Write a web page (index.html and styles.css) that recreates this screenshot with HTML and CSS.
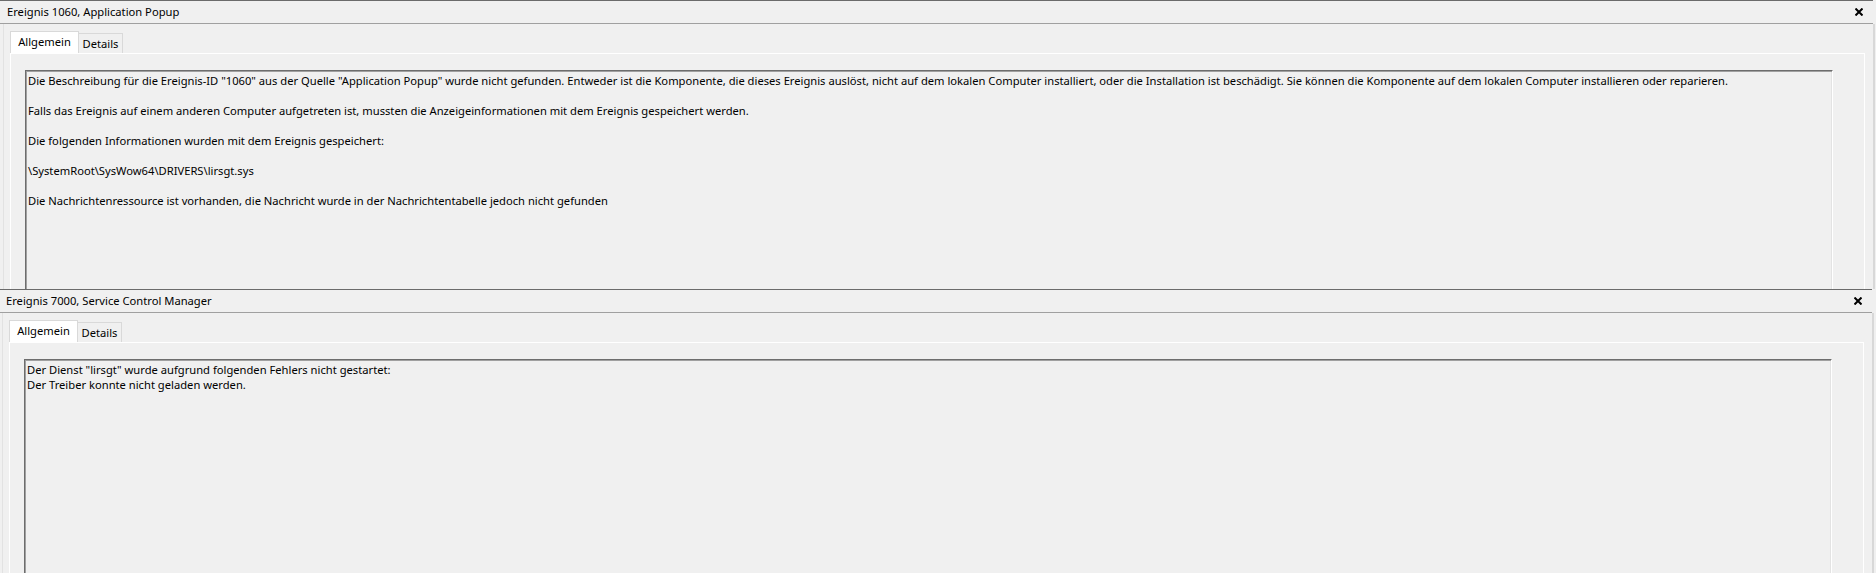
FILE: index.html
```html
<!DOCTYPE html>
<html lang="de">
<head>
<meta charset="utf-8">
<title>Ereignisse</title>
<link rel="stylesheet" href="styles.css">
</head>
<body>
<div class="panel">
  <div class="titlebar">
    <span class="title">Ereignis 1060, Application Popup</span>
    <svg class="close" width="8" height="8" viewBox="0 0 8 8"><path d="M0.5 0.5 L7.5 7.5 M7.5 0.5 L0.5 7.5" stroke="#000" stroke-width="2" fill="none"/></svg>
  </div>
  <div class="body">
    <div class="tabs">
      <div class="tab tab-active">Allgemein</div>
      <div class="tab tab-details">Details</div>
    </div>
    <div class="page">
      <div class="textbox">
        <p class="para">Die Beschreibung für die Ereignis-ID "1060" aus der Quelle "Application Popup" wurde nicht gefunden. Entweder ist die Komponente, die dieses Ereignis auslöst, nicht auf dem lokalen Computer installiert, oder die Installation ist beschädigt. Sie können die Komponente auf dem lokalen Computer installieren oder reparieren.</p>
        <p class="para">Falls das Ereignis auf einem anderen Computer aufgetreten ist, mussten die Anzeigeinformationen mit dem Ereignis gespeichert werden.</p>
        <p class="para">Die folgenden Informationen wurden mit dem Ereignis gespeichert:</p>
        <p class="para">\SystemRoot\SysWow64\DRIVERS\lirsgt.sys</p>
        <p class="para">Die Nachrichtenressource ist vorhanden, die Nachricht wurde in der Nachrichtentabelle jedoch nicht gefunden</p>
      </div>
    </div>
  </div>
</div>
<div class="panel panel-second">
  <div class="titlebar">
    <span class="title">Ereignis 7000, Service Control Manager</span>
    <svg class="close" width="8" height="8" viewBox="0 0 8 8"><path d="M0.5 0.5 L7.5 7.5 M7.5 0.5 L0.5 7.5" stroke="#000" stroke-width="2" fill="none"/></svg>
  </div>
  <div class="body">
    <div class="tabs">
      <div class="tab tab-active">Allgemein</div>
      <div class="tab tab-details">Details</div>
    </div>
    <div class="page">
      <div class="textbox">
        <p class="line">Der Dienst "lirsgt" wurde aufgrund folgenden Fehlers nicht gestartet:</p>
        <p class="line">Der Treiber konnte nicht geladen werden.</p>
      </div>
    </div>
  </div>
</div>
</body>
</html>
```
FILE: styles.css
```css
html, body {
  margin: 0;
  padding: 0;
}
body {
  width: 1876px;
  height: 573px;
  overflow: hidden;
  background: #f0f0f0;
  color: #000;
  font-family: "Noto Sans", "Open Sans", sans-serif;
  font-size: 11.2px;
}
.panel {
  width: 1876px;
  height: 289px;
  overflow: hidden;
}
.panel-second {
  margin-left: -1px;
  height: 285px;
}
.titlebar {
  width: 1873px;
  height: 24px;
  box-sizing: border-box;
  border-top: 1px solid #6b6b6b;
  border-bottom: 1px solid #a0a0a0;
  display: flex;
  align-items: center;
  justify-content: space-between;
  padding: 0 10px 0 7px;
}
.title {
  line-height: 22px;
  white-space: nowrap;
}
.close {
  display: block;
}
.body {
  width: 1872px;
  height: 265px;
  box-sizing: border-box;
  margin-left: 3px;
  padding: 7px 0 0 6px;
  border-left: 1px solid #e2e2e2;
  border-right: 2px solid #d8d8d8;
}
.tabs {
  display: flex;
  align-items: flex-end;
  height: 22px;
}
.tab {
  box-sizing: border-box;
  text-align: center;
  white-space: nowrap;
  border-top: 1px solid #d9d9d9;
  border-right: 1px solid #d9d9d9;
}
.tab-active {
  width: 69px;
  height: 22px;
  line-height: 20px;
  background: #fff;
  border-left: 1px solid #d9d9d9;
}
.tab-details {
  width: 44px;
  height: 20px;
  line-height: 19px;
  background: #f0f0f0;
}
.page {
  width: 1855px;
  height: 300px;
  box-sizing: border-box;
  border: 1px solid #fff;
  padding: 16px 0 0 14px;
}
.textbox {
  width: 1808px;
  height: 400px;
  box-sizing: border-box;
  border-style: solid;
  border-width: 1px;
  border-color: #6d6d6d #fff #fff #6d6d6d;
  box-shadow: inset 1px 1px 0 #a0a0a0, inset -1px -1px 0 #e3e3e3;
  padding: 2px 3px 0 2px;
}
.para {
  margin: 0 0 15px;
  line-height: 15px;
  white-space: nowrap;
}
.line {
  margin: 0;
  line-height: 15px;
  white-space: nowrap;
}
```
